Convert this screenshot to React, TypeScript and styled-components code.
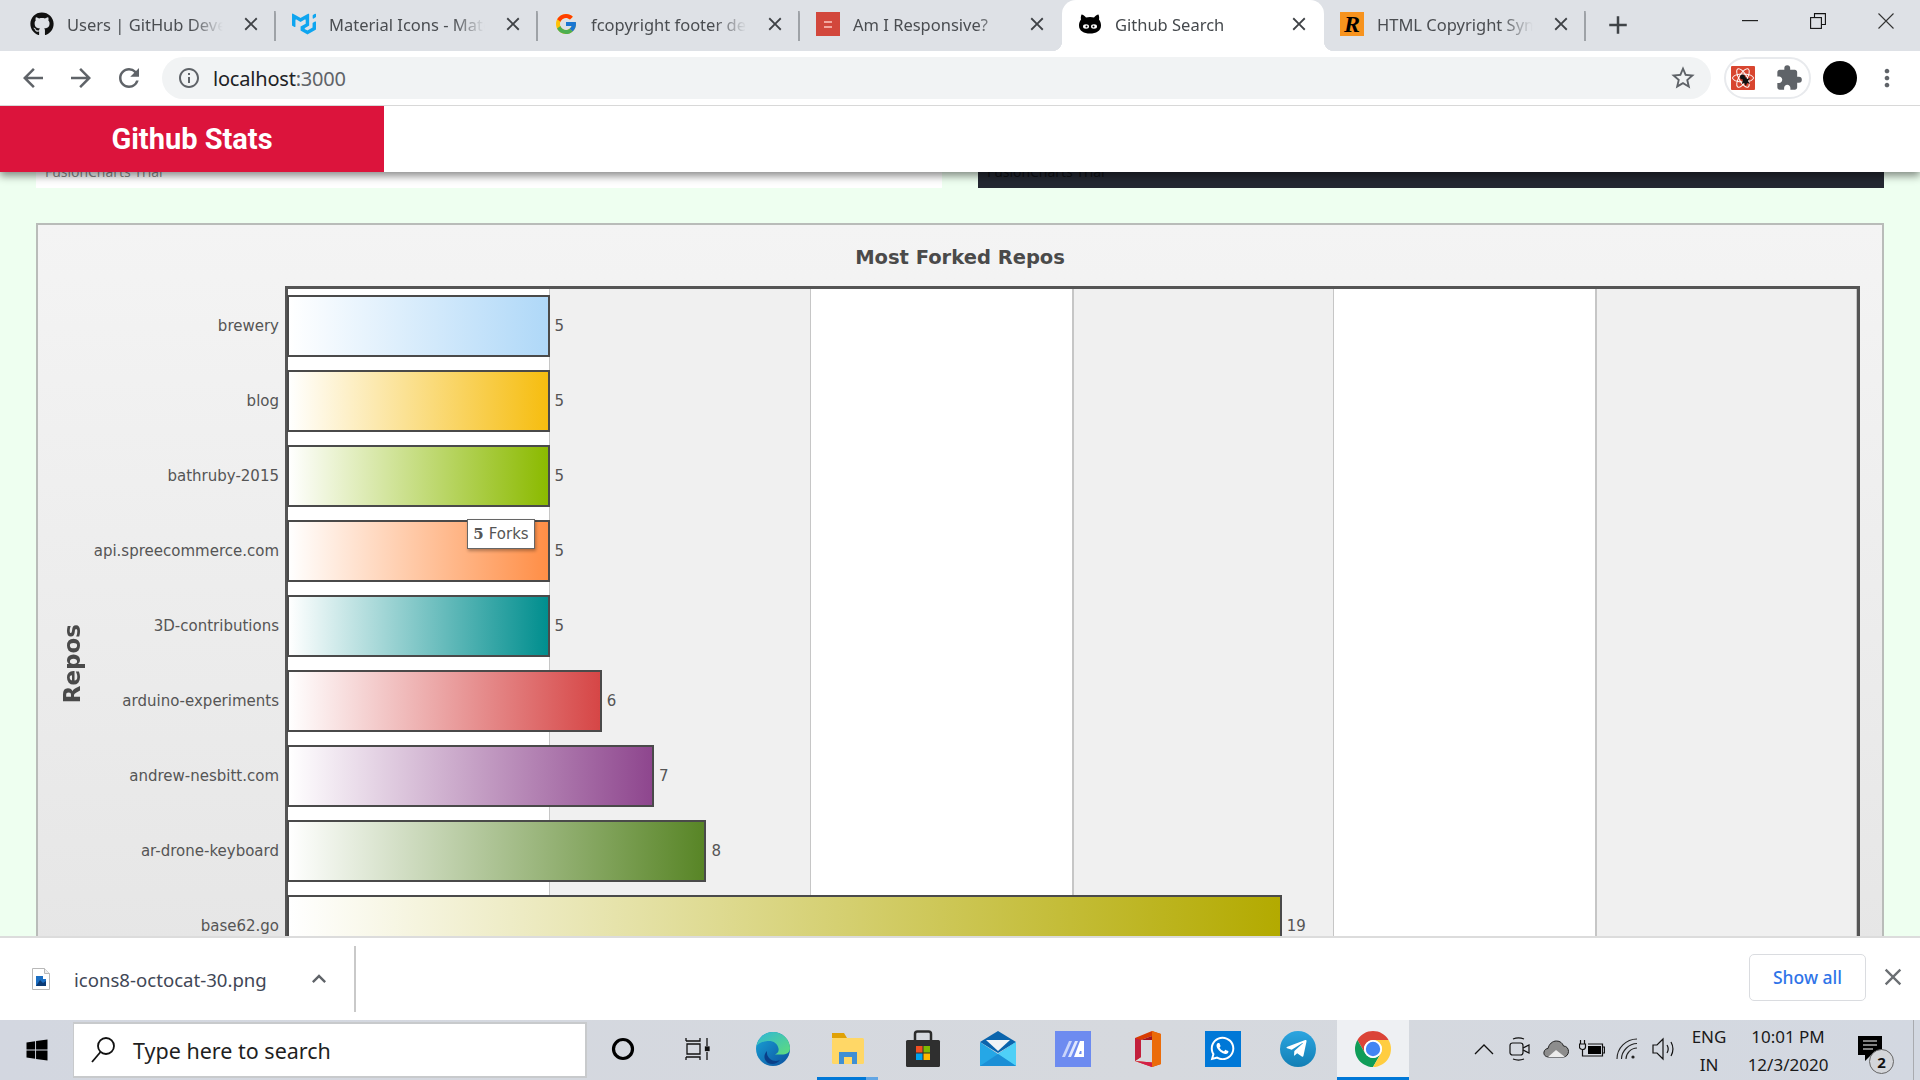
import React from 'react'
import styled, { createGlobalStyle } from 'styled-components'
import { FaGithub, FaWindows, FaWhatsapp, FaTelegramPlane } from 'react-icons/fa'
import { FcGoogle } from 'react-icons/fc'
import { SiMui } from 'react-icons/si'
import {
  MdArrowBack,
  MdArrowForward,
  MdRefresh,
  MdInfoOutline,
  MdStarBorder,
  MdExtension,
  MdMoreVert,
  MdClose,
  MdAdd,
  MdExpandLess,
} from 'react-icons/md'

const UNIT = 52.3

const GlobalStyle = createGlobalStyle`
  html, body {
    margin: 0;
    padding: 0;
    overflow: hidden;
    background: #fff;
  }
  * {
    box-sizing: border-box;
  }
`

const Screen = styled.div`
  width: 1920px;
  height: 1080px;
  display: flex;
  flex-direction: column;
  overflow: hidden;
  font-family: 'Noto Sans', 'Open Sans', sans-serif;
`

/* browser tabs */
const TabStrip = styled.div`
  height: 51px;
  flex: none;
  display: flex;
  align-items: stretch;
  padding-left: 14px;
  background: #dee1e6;
`

const Tab = styled.div<{ $active?: boolean; $divider?: boolean }>`
  position: relative;
  width: 262px;
  flex: none;
  display: flex;
  align-items: center;
  gap: 13px;
  padding: 0 13px 3px 16px;
  border-radius: 14px 14px 0 0;
  color: ${(p) => (p.$active ? '#45494d' : '#4a4d51')};
  background: ${(p) =>
    p.$active
      ? '#fff'
      : p.$divider
        ? 'linear-gradient(#9ea2a7, #9ea2a7) right center / 2px 30px no-repeat'
        : 'none'};

  ${(p) =>
    p.$active &&
    `
    &::before, &::after {
      content: '';
      position: absolute;
      bottom: 0;
      width: 10px;
      height: 10px;
    }
    &::before {
      left: -10px;
      background: radial-gradient(circle at 0 0, transparent 10px, #fff 10.5px);
    }
    &::after {
      right: -10px;
      background: radial-gradient(circle at 100% 0, transparent 10px, #fff 10.5px);
    }
  `}
`

const Favicon = styled.span`
  width: 24px;
  height: 24px;
  flex: none;
  display: flex;
  align-items: center;
  justify-content: center;
  font-size: 24px;
`

const TabTitle = styled.span`
  flex: 1;
  min-width: 0;
  overflow: hidden;
  white-space: nowrap;
  font-size: 16.5px;
  mask-image: linear-gradient(90deg, #000 78%, transparent 98%);
`

const TabClose = styled.span`
  width: 24px;
  height: 24px;
  flex: none;
  display: flex;
  align-items: center;
  justify-content: center;
  font-size: 22px;
  color: #3f4246;
`

const NewTab = styled.span`
  width: 30px;
  margin-left: 17px;
  display: flex;
  align-items: center;
  justify-content: center;
  padding-bottom: 2px;
  font-size: 30px;
  color: #3f4347;
`

const WindowControls = styled.div`
  margin-left: auto;
  display: flex;
  height: 41px;
`

const WindowButton = styled.span`
  width: 68px;
  display: flex;
  align-items: center;
  justify-content: center;
`

/* address bar row */
const Toolbar = styled.div`
  height: 55px;
  flex: none;
  display: flex;
  align-items: center;
  padding-left: 9px;
  background: #fff;
  border-bottom: 1px solid #d8d8d8;
`

const NavButton = styled.span`
  width: 48px;
  display: flex;
  align-items: center;
  justify-content: center;
  font-size: 30px;
  color: #5f6368;
`

const AddressBar = styled.div`
  margin-left: 9px;
  width: 1549px;
  height: 42px;
  display: flex;
  align-items: center;
  gap: 12px;
  padding: 0 14px 0 15px;
  border-radius: 21px;
  background: #f1f3f4;
`

const AddressIcon = styled.span<{ $end?: boolean }>`
  display: flex;
  font-size: ${(p) => (p.$end ? 28 : 24)}px;
  color: #5f6368;
  margin-left: ${(p) => (p.$end ? 'auto' : 0)};
`

const Url = styled.span`
  font-size: 20px;
  color: #202124;
  letter-spacing: -0.2px;
`

const UrlPort = styled.span`
  color: #5f6368;
`

const ExtensionPill = styled.div`
  margin-left: 13px;
  width: 87px;
  height: 42px;
  display: flex;
  align-items: center;
  gap: 20px;
  padding-left: 5px;
  border: 2px solid #e8eaed;
  border-radius: 21px;
`

const ExtensionIcon = styled.span`
  display: flex;
  font-size: 28px;
  color: #5f6368;
`

const Avatar = styled.span`
  width: 34px;
  height: 34px;
  margin-left: 12px;
  border-radius: 50%;
  background: #000;
`

const Kebab = styled.span`
  margin-left: 16px;
  display: flex;
  font-size: 28px;
  color: #5f6368;
`

/* page */
const PageArea = styled.div`
  position: relative;
  flex: 1;
  min-height: 0;
  overflow: hidden;
  background: #eefff0;
`

const Navbar = styled.header`
  position: absolute;
  z-index: 3;
  top: 0;
  left: 0;
  right: 0;
  height: 66px;
  background: #fff;
  box-shadow: 0 4px 8px rgba(0, 0, 0, 0.45);
`

const Brand = styled.div`
  width: 384px;
  height: 100%;
  display: flex;
  align-items: center;
  justify-content: center;
  background: #dc143c;
  color: #fff;
  font-family: Roboto, sans-serif;
  font-weight: 700;
  font-size: 29px;
`

const PageContent = styled.main`
  padding: 0 36px;
`

const TrialRow = styled.div`
  height: 82px;
  display: grid;
  grid-template-columns: 906px 906px;
  gap: 36px;
`

const TrialPanel = styled.div<{ $dark?: boolean }>`
  display: flex;
  align-items: flex-end;
  padding: 0 0 7px 9px;
  font-family: 'Open Sans', sans-serif;
  font-size: 14px;
  background: ${(p) => (p.$dark ? '#242832' : '#fff')};
  color: ${(p) => (p.$dark ? '#0e1014' : '#888')};
`

const ChartCard = styled.section`
  margin-top: 35px;
  border: 2px solid #b9bcb9;
  background: linear-gradient(#f4f4f4 0, #e6e6e6 720px);
  font-family: 'DejaVu Sans', Verdana, sans-serif;
`

const ChartTitle = styled.h2`
  height: 61px;
  margin: 0;
  padding-top: 20px;
  text-align: center;
  font-size: 19.5px;
  line-height: 26px;
  font-weight: 700;
  color: #4a4a4a;
`

const ChartBody = styled.div`
  display: flex;
  padding-right: 22px;
`

const AxisColumn = styled.div`
  width: 51px;
  flex: none;
  display: flex;
  align-items: center;
  justify-content: flex-end;
  padding-right: 4px;
`

const AxisTitle = styled.span`
  writing-mode: vertical-rl;
  transform: rotate(180deg);
  font-size: 23px;
  font-weight: 700;
  color: #4a4a4a;
`

const LabelColumn = styled.div`
  flex: none;
  width: 190px;
  margin-right: 6px;
  padding-top: 3px;
`

const RowLabel = styled.div`
  height: 75px;
  display: flex;
  align-items: center;
  justify-content: flex-end;
  padding-bottom: 1px;
  font-size: 15px;
  white-space: nowrap;
  color: #555;
`

const Plot = styled.div`
  position: relative;
  flex: 1;
  height: 756px;
  border: 3px solid #555;
  background: repeating-linear-gradient(
    90deg,
    #fff 0,
    #fff 261px,
    #c6c6c6 261px,
    #c6c6c6 262.5px,
    #f0f0f0 262.5px,
    #f0f0f0 521.8px,
    #c6c6c6 521.8px,
    #c6c6c6 523.2px
  );
`

const BarRow = styled.div`
  height: 75px;
  display: flex;
  align-items: center;
  gap: 5px;
  margin-left: -1px;
  padding-bottom: 2px;
`

const Bar = styled.div<{ $color: string }>`
  height: 62px;
  flex: none;
  border: 2px solid #4a4a4a;
  background: linear-gradient(90deg, #fff, ${(p) => p.$color});
`

const BarValue = styled.span`
  font-size: 15px;
  color: #555;
`

const Tooltip = styled.div`
  position: absolute;
  left: 179px;
  top: 230px;
  width: 68px;
  height: 30px;
  display: flex;
  align-items: center;
  justify-content: center;
  gap: 5px;
  border: 1px solid #666;
  background: #fff;
  box-shadow: 1px 2px 3px rgba(0, 0, 0, 0.3);
  font-size: 15px;
  color: #555;
`

const TooltipValue = styled.b`
  font-family: 'DejaVu Serif', serif;
`

/* download shelf */
const Shelf = styled.div`
  height: 84px;
  flex: none;
  display: flex;
  align-items: center;
  background: #fff;
  border-top: 2px solid #dcdcdc;
`

const FileIcon = styled.span`
  display: flex;
  margin-left: 32px;
  margin-right: 24px;
`

const FileName = styled.span`
  width: 193px;
  font-size: 18.6px;
  color: #3f4756;
  white-space: nowrap;
`

const ShelfChevron = styled.span`
  width: 40px;
  margin-left: 32px;
  display: flex;
  justify-content: center;
  font-size: 28px;
  color: #5f6368;
`

const ShelfDivider = styled.span`
  width: 2px;
  height: 66px;
  margin-left: 15px;
  background: #c9c9c9;
`

const ShowAll = styled.button`
  margin-left: auto;
  width: 117px;
  height: 47px;
  margin-bottom: 4px;
  border: 1px solid #dadce0;
  border-radius: 5px;
  background: #fff;
  font-family: inherit;
  font-size: 17.5px;
  font-weight: 500;
  color: #2f74e8;
`

const ShelfClose = styled.span`
  margin: 0 13px 4px 13px;
  display: flex;
  font-size: 28px;
  color: #6b6f73;
`

/* taskbar */
const Taskbar = styled.div`
  height: 60px;
  flex: none;
  display: flex;
  align-items: stretch;
  background: linear-gradient(90deg, #d3d7e0, #d6d9de 60%, #d3d8e1);
`

const StartButton = styled.span`
  width: 73px;
  flex: none;
  display: flex;
  align-items: center;
  justify-content: center;
  font-size: 24px;
  color: #000;
`

const SearchBox = styled.div`
  width: 514px;
  flex: none;
  margin: 2px -2px 2px 0;
  display: flex;
  align-items: center;
  gap: 17px;
  padding-left: 16px;
  background: #fff;
  border: 2px solid #c8cacc;
  border-left-width: 1px;
  color: #1f1f1f;
  font-size: 21.5px;
`

const TaskCell = styled.span<{ $active?: boolean; $open?: boolean }>`
  width: 75px;
  flex: none;
  display: flex;
  align-items: center;
  justify-content: center;
  padding-bottom: 3px;
  background: ${(p) =>
    p.$active
      ? 'linear-gradient(#0078d7, #0078d7) center bottom / 72px 3px no-repeat, linear-gradient(#eef0f3, #eef0f3) center / 72px 100% no-repeat'
      : p.$open
        ? 'linear-gradient(90deg, #0078d7 80%, #63a6e4 80%) center bottom / 61px 3px no-repeat'
        : 'none'};
`

const Tray = styled.div`
  margin-left: auto;
  display: flex;
  align-items: stretch;
`

const TrayIcon = styled.span`
  width: 36px;
  padding-bottom: 3px;
  display: flex;
  align-items: center;
  justify-content: center;
`

const TrayText = styled.div<{ $width: number }>`
  width: ${(p) => p.$width}px;
  display: flex;
  flex-direction: column;
  align-items: center;
  justify-content: center;
  gap: 3px;
  font-size: 17px;
  line-height: 25px;
  color: #1a1a1a;
`

const NotifyCell = styled.span`
  position: relative;
  width: 60px;
  display: flex;
  align-items: center;
  justify-content: center;
  padding-bottom: 3px;
`

const NotifyBadge = styled.span`
  position: absolute;
  left: 29px;
  top: 29px;
  width: 25px;
  height: 25px;
  display: flex;
  align-items: center;
  justify-content: center;
  border-radius: 50%;
  border: 1px solid #666;
  background: #d4d6da;
  font-size: 15px;
  font-weight: 700;
  color: #111;
`

const TrayEnd = styled.span`
  width: 1px;
  margin: 0 6px 0 13px;
  background: #a9abaf;
`

const OrangeFavicon = styled.span`
  width: 24px;
  height: 24px;
  display: flex;
  align-items: center;
  justify-content: center;
  background: #f7931e;
  color: #000;
  font-family: 'Liberation Serif', serif;
  font-style: italic;
  font-weight: 700;
  font-size: 24px;
`

const TileIcon = styled.span`
  width: 36px;
  height: 36px;
  display: flex;
  align-items: center;
  justify-content: center;
  background: #0078d7;
  color: #fff;
  font-size: 27px;
`

const RoundIcon = styled.span`
  width: 36px;
  height: 36px;
  display: flex;
  align-items: center;
  justify-content: center;
  border-radius: 50%;
  background: linear-gradient(#2ca5e0, #127fb5);
  color: #fff;
  font-size: 23px;
  padding-right: 2px;
`

const CatIcon = () => (
  <svg width="24" height="24" viewBox="0 0 24 24">
    <path d="M3.500 2.500C5 2.500 7 4 8 5.500c2.600-.7 5.400-.7 8 0C17 4 19 2.500 20.500 2.500c.8 2 .8 3.500.5 5 1.500 2 2 4 2 6 0 5.500-5 8-11 8s-11-2.500-11-8c0-2 .5-4 2-6-.3-1.500-.3-3 .5-5z" fill="#000" />
    <ellipse cx="8" cy="14.500" rx="3" ry="2.200" fill="#fff" />
    <ellipse cx="16" cy="14.500" rx="3" ry="2.200" fill="#fff" />
    <circle cx="8.500" cy="14.500" r="1" fill="#000" />
    <circle cx="15.500" cy="14.500" r="1" fill="#000" />
  </svg>
)

const ResponsiveIcon = () => (
  <svg width="24" height="24" viewBox="0 0 24 24">
    <rect width="24" height="24" fill="#d2473c" />
    <rect x="8" y="9" width="8" height="2" fill="#f2a79f" />
    <rect x="8" y="14" width="8" height="2" fill="#f2a79f" />
  </svg>
)

const ReactDevtoolsIcon = () => (
  <svg width="24" height="24" viewBox="0 0 24 24">
    <rect width="24" height="24" rx="1" fill="#d8452f" />
    <g fill="none" stroke="#fff" strokeWidth="1">
      <ellipse cx="12" cy="12" rx="10.500" ry="4" />
      <ellipse cx="12" cy="12" rx="10.500" ry="4" transform="rotate(60 12 12)" />
      <ellipse cx="12" cy="12" rx="10.500" ry="4" transform="rotate(120 12 12)" />
    </g>
    <circle cx="11.500" cy="11" r="2.500" fill="#111" />
    <path d="M12 13l3-2 1 2 3-1-2 3 2 3-3-1-1 3-2-3-2 1z" fill="#111" />
  </svg>
)

const MinimizeIcon = () => (
  <svg width="16" height="2" viewBox="0 0 16 2">
    <rect width="16" height="1.200" fill="#222" />
  </svg>
)

const RestoreIcon = () => (
  <svg width="16" height="16" viewBox="0 0 16 16" fill="none" stroke="#111" strokeWidth="1.100">
    <rect x="0.600" y="4.600" width="10.800" height="10.800" />
    <path d="M4.500 4.500V.6h10.900v10.900h-4" />
  </svg>
)

const CloseWindowIcon = () => (
  <svg width="16" height="16" viewBox="0 0 16 16" stroke="#333" strokeWidth="1.100">
    <path d="M.5.500l15 15M15.500.500l-15 15" />
  </svg>
)

const SearchGlassIcon = () => (
  <svg width="26" height="28" viewBox="0 0 26 28" fill="none" stroke="#111" strokeWidth="1.800">
    <circle cx="16" cy="10" r="8" />
    <path d="M10.500 16L2 26" />
  </svg>
)

const ImageFileIcon = () => (
  <svg width="18" height="22" viewBox="0 0 18 22">
    <path d="M.5.500h12l5 5v16H.5z" fill="#fff" stroke="#b8b8b8" />
    <path d="M12.500.500v5h5" fill="#eee" stroke="#b8b8b8" />
    <rect x="4" y="8" width="10" height="10" fill="#1b6ec2" />
    <path d="M4 18l4-6 3 3 3-2v5z" fill="#0b3a75" />
    <rect x="11" y="8" width="3" height="3" fill="#fff" />
  </svg>
)

const CortanaIcon = () => (
  <svg width="24" height="24" viewBox="0 0 24 24" fill="none" stroke="#000" strokeWidth="3.200">
    <circle cx="12" cy="12" r="9.500" />
  </svg>
)

const TaskViewIcon = () => (
  <svg width="26" height="24" viewBox="0 0 26 24" fill="none" stroke="#111" strokeWidth="1.300">
    <path d="M1 4h14v-3M1 4V1M1 20h14v3M1 20v3M2 7h13v10H2zM22 1v8M22 15v8" />
    <rect x="20.500" y="10" width="3.500" height="3.500" fill="#111" />
  </svg>
)

const EdgeIcon = () => (
  <svg width="36" height="36" viewBox="0 0 36 36">
    <defs>
      <linearGradient id="edgeBase" x1="0" y1="0" x2="1" y2="1">
        <stop offset="0" stopColor="#1aa6d8" />
        <stop offset="1" stopColor="#0c4f9e" />
      </linearGradient>
      <linearGradient id="edgeTop" x1="0" y1="0" x2="1" y2="1">
        <stop offset="0" stopColor="#2fb7d6" />
        <stop offset="1" stopColor="#5fdc7c" />
      </linearGradient>
    </defs>
    <circle cx="18" cy="18" r="17" fill="url(#edgeBase)" />
    <path d="M1.500 15C3.500 6 10.500 1 18 1c10 0 17 8 17 16 0 5-4 6.500-8 6.500h-7c3-1.500 4-3.500 3.500-6C22.500 12 18 9.500 12.500 10 7.500 10.500 3.500 12 1.500 15z" fill="url(#edgeTop)" />
    <path d="M12 20c-1 7 6 12 13 9-3 4-8 5-12 3-4-3-5-8-1-12z" fill="#0a3f88" />
  </svg>
)

const ExplorerIcon = () => (
  <svg width="34" height="36" viewBox="0 0 34 36">
    <path d="M1 2h12l3 5H1z" fill="#e0a106" />
    <rect x="1" y="7" width="32" height="26" rx="1.500" fill="#ffd766" />
    <path d="M8 33V21h18v12h-5v-7h-8v7z" fill="#3f8fd4" />
  </svg>
)

const StoreIcon = () => (
  <svg width="36" height="38" viewBox="0 0 36 38">
    <path d="M10 10V4c0-1.500 1-2.500 2.500-2.500h11C25 1.500 26 2.500 26 4v6" fill="none" stroke="#2b2b2b" strokeWidth="2.500" />
    <rect x="1" y="10" width="34" height="27" rx="1.500" fill="#2f2f2f" />
    <rect x="11" y="16" width="6.500" height="6.500" fill="#f25022" />
    <rect x="18.500" y="16" width="6.500" height="6.500" fill="#7fba00" />
    <rect x="11" y="23.500" width="6.500" height="6.500" fill="#00a4ef" />
    <rect x="18.500" y="23.500" width="6.500" height="6.500" fill="#ffb900" />
  </svg>
)

const MailIcon = () => (
  <svg width="36" height="36" viewBox="0 0 36 36">
    <path d="M0 11L18 0l18 11-18 11z" fill="#0a64ad" />
    <path d="M6 9h24l-12 11z" fill="#f2f4f6" />
    <path d="M0 11l18 12 18-12v24H0z" fill="#25a7e6" />
    <path d="M36 11v24L18 23z" fill="#4fd0f7" />
    <path d="M0 35l18-12 18 12z" fill="#1b8fd6" />
  </svg>
)

const ArcIcon = () => (
  <svg width="36" height="36" viewBox="0 0 36 36">
    <rect width="36" height="36" fill="#6d8bf0" />
    <path d="M14 10h3l-7 16H7z" fill="#c9d5fb" />
    <path d="M20 10h3l-7 16h-3z" fill="#dfe6fd" />
    <path d="M25 10h4v16H19z" fill="#fff" />
    <path d="M25 20h1.500v3H24z" fill="#6d8bf0" />
  </svg>
)

const OfficeIcon = () => (
  <svg width="30" height="38" viewBox="0 0 30 38">
    <path d="M2 8L19 1l9 3v30l-9 3L2 31l17 1.500V6L8 10v17L2 31z" fill="#d83b01" />
    <path d="M19 1l9 3v30l-9 3z" fill="#eb6c0a" />
    <path d="M2 8l6 2v17l-6 4z" fill="#c21f3c" />
    <path d="M8 10l11-4v4z" fill="#a3141f" />
    <path d="M2 31l17 1.500V37z" fill="#d3204a" />
  </svg>
)

const ChromeIcon = () => (
  <svg width="36" height="36" viewBox="4 4 40 40">
    <path d="M6.680 14A20 20 0 0 1 41.320 14H24A10 10 0 0 0 15.340 29Z" fill="#db4437" />
    <path d="M6.680 14L15.340 29A10 10 0 0 0 32.660 29L24 44A20 20 0 0 1 6.680 14Z" fill="#0f9d58" />
    <path d="M41.320 14H24A10 10 0 0 1 32.660 29L24 44A20 20 0 0 0 41.320 14Z" fill="#ffcd40" />
    <circle cx="24" cy="24" r="10" fill="#fff" />
    <circle cx="24" cy="24" r="8" fill="#4285f4" />
  </svg>
)

const TrayChevronIcon = () => (
  <svg width="20" height="12" viewBox="0 0 20 12" fill="none" stroke="#111" strokeWidth="1.300">
    <path d="M1 11l9-9 9 9" />
  </svg>
)

const MeetIcon = () => (
  <svg width="24" height="24" viewBox="0 0 24 24" fill="none" stroke="#111" strokeWidth="1.200">
    <rect x="2" y="6" width="13" height="12" rx="2.500" />
    <path d="M15 11l6-3v8l-6-3M5 2c4-1.500 7-1.500 11 0M5 22c4 1.500 7 1.500 11 0" />
  </svg>
)

const CloudIcon = () => (
  <svg width="26" height="18" viewBox="0 0 26 18">
    <path d="M6 17C2 17 .500 14.500 1 12c.500-2.500 2.500-3.500 4-3.500C6 4 9.500 1 13.500 1c3.500 0 6 2 7 5 3 0 5 2.500 5 5.500S23 17 20.500 17z" fill="#8d8d8d" stroke="#222" strokeWidth="1" />
    <path d="M5 17l8-7 9 7z" fill="#ececec" />
  </svg>
)

const BatteryIcon = () => (
  <svg width="26" height="20" viewBox="0 0 26 20" fill="none" stroke="#111" strokeWidth="1.200">
    <path d="M1.500 1v4M5.500 1v4M0.500 5h6v3c0 1.500-1.500 2.500-3 2.500S.500 9.500.500 8zM3.500 10.500V17h20V5H9M24 8h1.500v6H24" />
    <rect x="9" y="7" width="13" height="8" fill="#000" stroke="none" />
  </svg>
)

const WifiIcon = () => (
  <svg width="24" height="22" viewBox="0 0 24 22" fill="none" stroke="#222" strokeWidth="1.100">
    <path d="M1 21C1 10 10 1 21 1M5.500 21C5.500 13 13 5.500 21 5.500M10 21c0-5.500 5-11 11-11" />
    <circle cx="17" cy="19" r="1.600" fill="#222" stroke="none" />
  </svg>
)

const SpeakerIcon = () => (
  <svg width="24" height="24" viewBox="0 0 24 24" fill="none" stroke="#111" strokeWidth="1.200">
    <path d="M1 8h4l6-6v20l-6-6H1zM15 8c1.500 2.500 1.500 5.500 0 8M19 5c2.500 4.500 2.500 9.500 0 14" />
  </svg>
)

const NotificationIcon = () => (
  <svg width="24" height="26" viewBox="0 0 24 26">
    <path d="M0 0h24v19H13l-6 6v-6H0z" fill="#000" />
    <path d="M5 5h14M5 9h14M5 13h10" stroke="#fff" strokeWidth="1" />
  </svg>
)

const tabs = [
  { title: 'Users | GitHub Developer Guide', icon: <FaGithub color="#111" />, divider: true },
  { title: 'Material Icons - Material-UI', icon: <SiMui color="#0ea5f0" />, divider: true },
  { title: 'fcopyright footer design', icon: <FcGoogle />, divider: true },
  { title: 'Am I Responsive?', icon: <ResponsiveIcon /> },
  { title: 'Github Search', icon: <CatIcon />, active: true },
  { title: 'HTML Copyright Symbol', icon: <OrangeFavicon>R</OrangeFavicon>, divider: true },
]

const repos = [
  { name: 'brewery', forks: 5, color: '#afd8f8' },
  { name: 'blog', forks: 5, color: '#f6bd0f' },
  { name: 'bathruby-2015', forks: 5, color: '#8bba00' },
  { name: 'api.spreecommerce.com', forks: 5, color: '#ff8e46' },
  { name: '3D-contributions', forks: 5, color: '#008e8e' },
  { name: 'arduino-experiments', forks: 6, color: '#d64646' },
  { name: 'andrew-nesbitt.com', forks: 7, color: '#8e468e' },
  { name: 'ar-drone-keyboard', forks: 8, color: '#588526' },
  { name: 'base62.go', forks: 19, color: '#b3aa00' },
]

const App = () => {
  return (
    <Screen>
      <GlobalStyle />
      <TabStrip>
        {tabs.map((tab) => (
          <Tab key={tab.title} $active={tab.active} $divider={tab.divider}>
            <Favicon>{tab.icon}</Favicon>
            <TabTitle>{tab.title}</TabTitle>
            <TabClose>
              <MdClose />
            </TabClose>
          </Tab>
        ))}
        <NewTab>
          <MdAdd />
        </NewTab>
        <WindowControls>
          <WindowButton>
            <MinimizeIcon />
          </WindowButton>
          <WindowButton>
            <RestoreIcon />
          </WindowButton>
          <WindowButton>
            <CloseWindowIcon />
          </WindowButton>
        </WindowControls>
      </TabStrip>

      <Toolbar>
        <NavButton>
          <MdArrowBack />
        </NavButton>
        <NavButton>
          <MdArrowForward />
        </NavButton>
        <NavButton>
          <MdRefresh />
        </NavButton>
        <AddressBar>
          <AddressIcon>
            <MdInfoOutline />
          </AddressIcon>
          <Url>
            localhost<UrlPort>:3000</UrlPort>
          </Url>
          <AddressIcon $end>
            <MdStarBorder />
          </AddressIcon>
        </AddressBar>
        <ExtensionPill>
          <ReactDevtoolsIcon />
          <ExtensionIcon>
            <MdExtension />
          </ExtensionIcon>
        </ExtensionPill>
        <Avatar />
        <Kebab>
          <MdMoreVert />
        </Kebab>
      </Toolbar>

      <PageArea>
        <Navbar>
          <Brand>Github Stats</Brand>
        </Navbar>
        <PageContent>
          <TrialRow>
            <TrialPanel>FusionCharts Trial</TrialPanel>
            <TrialPanel $dark>FusionCharts Trial</TrialPanel>
          </TrialRow>
          <ChartCard>
            <ChartTitle>Most Forked Repos</ChartTitle>
            <ChartBody>
              <AxisColumn>
                <AxisTitle>Repos</AxisTitle>
              </AxisColumn>
              <LabelColumn>
                {repos.map((repo) => (
                  <RowLabel key={repo.name}>{repo.name}</RowLabel>
                ))}
              </LabelColumn>
              <Plot>
                {repos.map((repo) => (
                  <BarRow key={repo.name}>
                    <Bar $color={repo.color} style={{ width: repo.forks * UNIT + 1 }} />
                    <BarValue>{repo.forks}</BarValue>
                  </BarRow>
                ))}
                <Tooltip>
                  <TooltipValue>5</TooltipValue> Forks
                </Tooltip>
              </Plot>
            </ChartBody>
          </ChartCard>
        </PageContent>
      </PageArea>

      <Shelf>
        <FileIcon>
          <ImageFileIcon />
        </FileIcon>
        <FileName>icons8-octocat-30.png</FileName>
        <ShelfChevron>
          <MdExpandLess />
        </ShelfChevron>
        <ShelfDivider />
        <ShowAll>Show all</ShowAll>
        <ShelfClose>
          <MdClose />
        </ShelfClose>
      </Shelf>

      <Taskbar>
        <StartButton>
          <FaWindows />
        </StartButton>
        <SearchBox>
          <SearchGlassIcon />
          Type here to search
        </SearchBox>
        <TaskCell>
          <CortanaIcon />
        </TaskCell>
        <TaskCell>
          <TaskViewIcon />
        </TaskCell>
        <TaskCell>
          <EdgeIcon />
        </TaskCell>
        <TaskCell $open>
          <ExplorerIcon />
        </TaskCell>
        <TaskCell>
          <StoreIcon />
        </TaskCell>
        <TaskCell>
          <MailIcon />
        </TaskCell>
        <TaskCell>
          <ArcIcon />
        </TaskCell>
        <TaskCell>
          <OfficeIcon />
        </TaskCell>
        <TaskCell>
          <TileIcon>
            <FaWhatsapp />
          </TileIcon>
        </TaskCell>
        <TaskCell>
          <RoundIcon>
            <FaTelegramPlane />
          </RoundIcon>
        </TaskCell>
        <TaskCell $active>
          <ChromeIcon />
        </TaskCell>
        <Tray>
          <TrayIcon>
            <TrayChevronIcon />
          </TrayIcon>
          <TrayIcon>
            <MeetIcon />
          </TrayIcon>
          <TrayIcon>
            <CloudIcon />
          </TrayIcon>
          <TrayIcon>
            <BatteryIcon />
          </TrayIcon>
          <TrayIcon>
            <WifiIcon />
          </TrayIcon>
          <TrayIcon>
            <SpeakerIcon />
          </TrayIcon>
          <TrayText $width={54}>
            <span>ENG</span>
            <span>IN</span>
          </TrayText>
          <TrayText $width={104}>
            <span>10:01 PM</span>
            <span>12/3/2020</span>
          </TrayText>
          <NotifyCell>
            <NotificationIcon />
            <NotifyBadge>2</NotifyBadge>
          </NotifyCell>
          <TrayEnd />
        </Tray>
      </Taskbar>
    </Screen>
  )
}

export default App
